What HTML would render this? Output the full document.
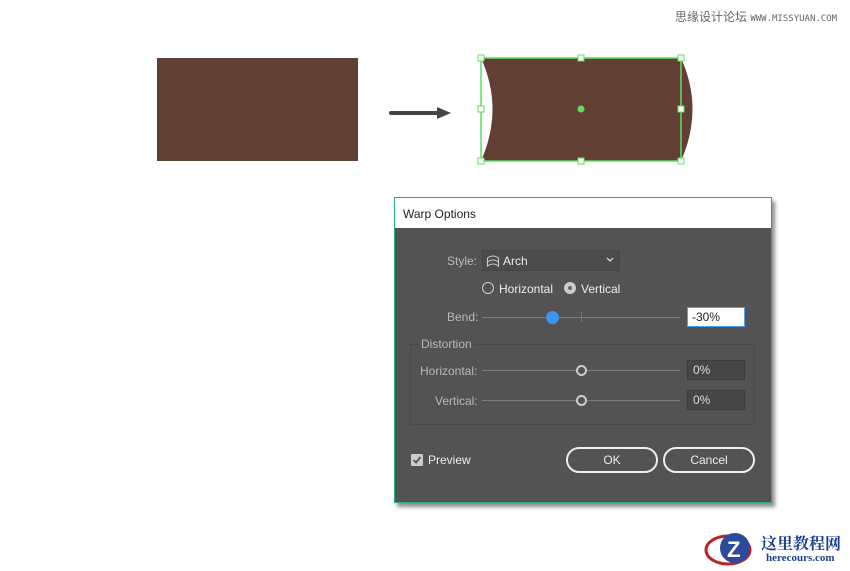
<!DOCTYPE html>
<html><head><meta charset="utf-8"><style>
*{margin:0;padding:0;box-sizing:border-box}
body{width:850px;height:571px;background:#fff;position:relative;overflow:hidden;font-family:"Liberation Sans","Noto Sans CJK SC",sans-serif}
.a{position:absolute}
.dlg{left:394px;top:197px;width:378px;height:306px;border:1px solid #2fa58c;background:#535353;box-shadow:3px 4px 4px rgba(0,0,0,.45)}
.title{left:0;top:0;width:376px;height:30px;background:#fff;font-size:12px;color:#222;padding:9px 0 0 8px}
.lbl{font-size:12px;color:#b8b8b8}
.wt{font-size:12px;color:#eee}
.track{height:1px;background:#7a7a7a}
.field{width:58px;height:20px;background:#454545;border:1px solid #3c3c3c;color:#ddd;font-size:12px;padding:2px 0 0 5px}
.knob{width:11px;height:11px;border-radius:50%;border:2px solid #ccc;background:#535353}
.btn{height:26px;border:2px solid #eee;border-radius:13px;color:#eee;font-size:12px;text-align:center;line-height:22px}
</style></head><body>
<div class="a" style="left:675px;top:8px;font-size:12px;color:#666">思缘设计论坛 <span style="font-size:9px;font-family:'DejaVu Sans Mono',monospace">WWW.MISSYUAN.COM</span></div>
<div class="a" style="left:157px;top:58px;width:201px;height:103px;background:#613f35"></div>
<svg class="a" style="left:385px;top:100px" width="75" height="25"><line x1="6" y1="13" x2="58" y2="13" stroke="#444" stroke-width="4" stroke-linecap="round"/><path d="M52 7 L66 13 L52 19 Z" fill="#444"/></svg>
<svg class="a" style="left:470px;top:48px" width="240" height="125">
<path d="M11 10 L211 10 Q234 61 211 113 L11 113 Q34 61 11 10 Z" fill="#613f35"/>
<rect x="11" y="10" width="200" height="103" fill="none" stroke="#5ee05e" stroke-width="1.5"/>
<g fill="#fff" stroke="#5ee05e" stroke-width="1"><rect x="8" y="7" width="6" height="6"/><rect x="108" y="7" width="6" height="6"/><rect x="208" y="7" width="6" height="6"/><rect x="8" y="58" width="6" height="6"/><rect x="208" y="58" width="6" height="6"/><rect x="8" y="110" width="6" height="6"/><rect x="108" y="110" width="6" height="6"/><rect x="208" y="110" width="6" height="6"/></g>
<circle cx="111" cy="61" r="3.5" fill="#5ee05e"/></svg>
<div class="a dlg">
<div class="a title">Warp Options</div>
<div class="a lbl" style="left:52px;top:56px">Style:</div>
<div class="a" style="left:87px;top:52px;width:138px;height:21px;background:#4b4b4b;border:1px solid #474747"></div>
<svg class="a" style="left:91px;top:56px" width="14" height="14"><path d="M1.5 12 V4 Q7 0 12.5 4 V12 Q7 8 1.5 12 Z M1.5 8 Q7 4 12.5 8" fill="none" stroke="#ccc" stroke-width="1.1"/></svg>
<div class="a wt" style="left:108px;top:56px">Arch</div>
<svg class="a" style="left:211px;top:59px" width="8" height="6"><path d="M1 1 L4 4 L7 1" fill="none" stroke="#ddd" stroke-width="1.3"/></svg>
<div class="a" style="left:87px;top:84px;width:12px;height:12px;border:1.5px solid #ccc;border-radius:50%"></div>
<div class="a wt" style="left:104px;top:84px">Horizontal</div>
<div class="a" style="left:169px;top:84px;width:12px;height:12px;border-radius:50%;background:#ccc"></div>
<div class="a" style="left:173px;top:88px;width:4px;height:4px;border-radius:50%;background:#666"></div>
<div class="a wt" style="left:186px;top:84px">Vertical</div>
<div class="a lbl" style="left:52px;top:112px">Bend:</div>
<div class="a track" style="left:87px;top:119px;width:198px"></div>
<div class="a" style="left:186px;top:114px;width:1px;height:10px;background:#777"></div>
<div class="a" style="left:151px;top:113px;width:13px;height:13px;border-radius:50%;background:#3d95f0"></div>
<div class="a" style="left:292px;top:109px;width:58px;height:20px;background:#fff;border:1px solid #4aa3f0;font-size:12px;color:#222;padding:2px 0 0 4px">-30%</div>
<div class="a" style="left:15px;top:146px;width:345px;height:81px;border:1px solid #4a4a4a"></div>
<div class="a lbl" style="left:24px;top:139px;background:#535353;padding:0 2px">Distortion</div>
<div class="a lbl" style="left:25px;top:166px">Horizontal:</div>
<div class="a track" style="left:87px;top:172px;width:198px"></div>
<div class="a knob" style="left:181px;top:167px"></div>
<div class="a field" style="left:292px;top:162px">0%</div>
<div class="a lbl" style="left:40px;top:196px">Vertical:</div>
<div class="a track" style="left:87px;top:202px;width:198px"></div>
<div class="a knob" style="left:181px;top:197px"></div>
<div class="a field" style="left:292px;top:192px">0%</div>
<div class="a" style="left:16px;top:256px;width:12px;height:12px;background:#ccc;border-radius:1px"></div>
<svg class="a" style="left:16px;top:256px" width="12" height="12"><path d="M2.5 6 L5 8.5 L9.5 3" fill="none" stroke="#555" stroke-width="1.8"/></svg>
<div class="a wt" style="left:33px;top:255px">Preview</div>
<div class="a btn" style="left:171px;top:249px;width:92px">OK</div>
<div class="a btn" style="left:268px;top:249px;width:92px">Cancel</div>
</div>
<svg class="a" style="left:702px;top:528px" width="55" height="42"><ellipse cx="26" cy="22" rx="22" ry="14" fill="none" stroke="#b22" stroke-width="3"/><circle cx="33" cy="20" r="15" fill="#2d4a9a"/><text x="25" y="29" font-size="22" font-weight="bold" fill="#fff" font-family="Liberation Sans">Z</text></svg>
<div class="a" style="left:761px;top:531px;font-size:16px;font-weight:bold;color:#1d3f93;font-family:'Noto Serif CJK SC',serif">这里教程网</div>
<div class="a" style="left:766px;top:552px;font-size:11px;font-weight:bold;color:#1d3f93;font-family:'Liberation Serif',serif">herecours.com</div>
</body></html>
